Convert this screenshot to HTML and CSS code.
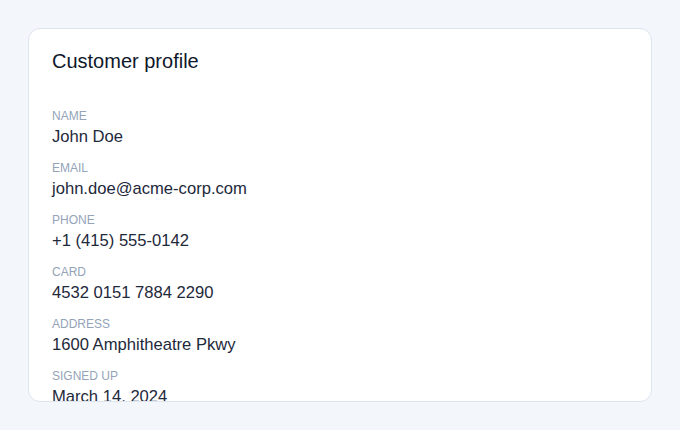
FILE: index.html
```html
<!DOCTYPE html>
<html lang="en">
<head>
    <meta charset="UTF-8">
    <title>Customer profile</title>
    <link rel="stylesheet" href="styles.css">
</head>
<body>
<div class="card">
    <h1 class="card-title">Customer profile</h1>
    <dl class="fields">
        <div class="field">
            <dt>Name</dt>
            <dd>John Doe</dd>
        </div>
        <div class="field">
            <dt>Email</dt>
            <dd>john.doe@acme-corp.com</dd>
        </div>
        <div class="field">
            <dt>Phone</dt>
            <dd>+1 (415) 555-0142</dd>
        </div>
        <div class="field">
            <dt>Card</dt>
            <dd>4532 0151 7884 2290</dd>
        </div>
        <div class="field">
            <dt>Address</dt>
            <dd>1600 Amphitheatre Pkwy</dd>
        </div>
        <div class="field">
            <dt>Signed up</dt>
            <dd>March 14, 2024</dd>
        </div>
    </dl>
</div>
</body>
</html>
```

FILE: styles.css
```css
* {
    padding: 0;
    margin: 0;
    box-sizing: border-box;
}

html, body {
    height: 100%;
}

body {
    background: #f3f6fb;
    font-family: "Liberation Sans", Arial, sans-serif;
    padding: 28px;
}

.card {
    height: 374px;
    background: #fff;
    border: 1px solid #dde5ef;
    border-radius: 12px;
    padding: 20px 23px;
    overflow: hidden;
}

.card-title {
    font-size: 20px;
    font-weight: normal;
    line-height: 24px;
    color: #0f172a;
    margin-bottom: 35px;
}

.fields {
    display: flex;
    flex-direction: column;
    gap: 11px;
}

.field dt {
    font-size: 12px;
    line-height: 16px;
    color: #94a3b8;
    text-transform: uppercase;
}

.field dd {
    font-size: 16.6px;
    line-height: 24px;
    padding-top: 1px;
    color: #1e293b;
}
```
